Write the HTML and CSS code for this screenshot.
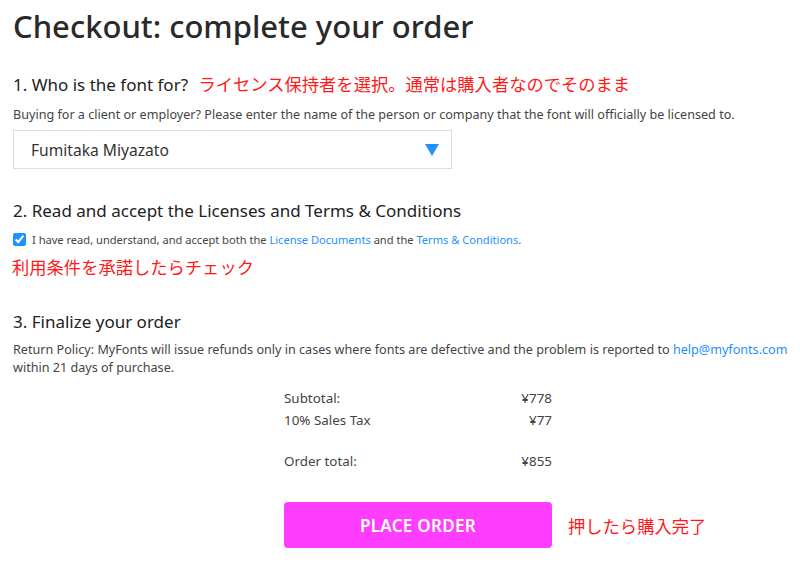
FILE: index.html
```html
<!DOCTYPE html>
<html lang="ja">
<head>
    <meta charset="UTF-8">
    <meta name="viewport" content="width=device-width, initial-scale=1.0">
    <title>Checkout</title>
    <link rel="stylesheet" href="styles.css">
</head>
<body>
    <h1 class="page-title">Checkout: complete your order</h1>

    <section class="step">
        <h2 class="step-title">1. Who is the font for? <span class="note">ライセンス保持者を選択。通常は購入者なのでそのまま</span></h2>
        <p class="hint">Buying for a client or employer? Please enter the name of the person or company that the font will officially be licensed to.</p>
        <div class="select-box">
            <span>Fumitaka Miyazato</span>
            <svg class="caret" width="14" height="12" viewBox="0 0 14 12"><polygon points="0,0 14,0 7,12" fill="#1e90ff"/></svg>
        </div>
    </section>

    <section class="step">
        <h2 class="step-title">2. Read and accept the Licenses and Terms &amp; Conditions</h2>
        <label class="agree">
            <input type="checkbox" checked>
            <span>I have read, understand, and accept both the <a href="#">License Documents</a> and the <a href="#">Terms &amp; Conditions</a>.</span>
        </label>
        <p class="note note-block">利用条件を承諾したらチェック</p>
    </section>

    <section class="step step-last">
        <h2 class="step-title">3. Finalize your order</h2>
        <p class="policy">Return Policy: MyFonts will issue refunds only in cases where fonts are defective and the problem is reported to <a href="#">help@myfonts.com</a> within 21 days of purchase.</p>

        <div class="summary">
            <div class="row"><span>Subtotal:</span><span>¥778</span></div>
            <div class="row"><span>10% Sales Tax</span><span>¥77</span></div>
            <div class="row row-total"><span>Order total:</span><span>¥855</span></div>
        </div>

        <div class="order-line">
            <button class="place-order">PLACE ORDER</button>
            <span class="note">押したら購入完了</span>
        </div>
    </section>
</body>
</html>
```

FILE: styles.css
```css
body {
    font-family: "Noto Sans", "Noto Sans CJK JP", sans-serif;
    color: #333;
    background: #fff;
    margin: 0;
    padding: 0 4px 0 13px;
}
a {
    color: #1e90ff;
    text-decoration: none;
}
.page-title {
    font-size: 31px;
    font-weight: 500;
    color: #2a2a2a;
    margin: 6px 0 0;
    line-height: 40px;
}
.step {
    margin-top: 25px;
}
.step + .step {
    margin-top: 29px;
}
.step-title {
    font-size: 17px;
    font-weight: normal;
    color: #222;
    margin: 0;
    line-height: 26px;
}
.note {
    font-family: "Noto Sans CJK JP", sans-serif;
    color: #ff1a1a;
    font-size: 17.3px;
    margin-left: 6px;
}
.hint {
    font-size: 12.6px;
    color: #444;
    margin: 8px 0 7px;
}
.select-box {
    width: 439px;
    height: 39px;
    box-sizing: border-box;
    border: 1px solid #ddd;
    display: flex;
    align-items: center;
    justify-content: space-between;
    padding: 0 12px 0 17px;
    font-size: 15.6px;
    color: #333;
}
.agree {
    display: flex;
    align-items: center;
    gap: 6px;
    font-size: 11.1px;
    color: #444;
    margin-top: 8px;
}
.agree input {
    margin: 0;
    width: 13px;
    height: 13px;
    accent-color: #1e90ff;
}
.note-block {
    margin: 8px 0 0 -1px;
    line-height: 24px;
}
.step + .step-last {
    margin-top: 30px;
}
.policy {
    font-size: 12.6px;
    line-height: 18px;
    color: #444;
    margin: 6px 0 0;
}
.summary {
    width: 268px;
    margin: 10px 0 0 271px;
    font-size: 13.4px;
    color: #444;
}
.row {
    display: flex;
    justify-content: space-between;
    line-height: 22px;
}
.row-total {
    margin-top: 19px;
}
.order-line {
    display: flex;
    align-items: center;
    gap: 16px;
    margin: 30px 0 0 271px;
}
.place-order {
    width: 268px;
    height: 46px;
    background: #ff3dff;
    color: #fff;
    border: none;
    border-radius: 4px;
    font-family: "Noto Sans", sans-serif;
    font-size: 17px;
    font-weight: 600;
    letter-spacing: 0.3px;
}
.order-line .note {
    margin-left: 0;
}
```
